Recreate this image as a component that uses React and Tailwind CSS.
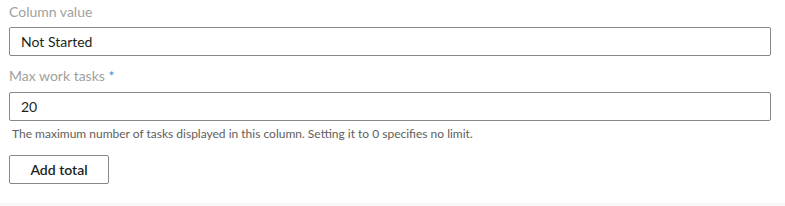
export default function App() {
  return (
    <div className="w-[785px] h-[206px] bg-white flex flex-col font-['Segoe_UI','Lato',sans-serif] overflow-hidden">
      <div className="flex flex-col px-[9px] pt-[2px] pr-[14px]">
        {/* Column value */}
        <label className="text-[14px] leading-[20px] text-[#a19f9d]">Column value</label>
        <div className="mt-[5px] h-[29px] border border-[#8a8886] rounded-[2px] flex items-center px-[11px] text-[14px] text-[#201f1e]">
          Not Started
        </div>

        {/* Max work tasks */}
        <label className="mt-[10px] text-[14px] leading-[20px] text-[#a19f9d]">
          Max work tasks <span className="text-[#3b8fd9]">*</span>
        </label>
        <div className="mt-[6px] h-[29px] border border-[#8a8886] rounded-[2px] flex items-center px-[11px] text-[14px] text-[#201f1e]">
          20
        </div>
        <p className="mt-[4px] pl-[3px] text-[12px] leading-[18px] text-[#605e5c]">
          The maximum number of tasks displayed in this column. Setting it to 0 specifies no limit.
        </p>

        <button
          type="button"
          className="mt-[12px] w-[100px] h-[29px] border border-[#8a8886] rounded-[2px] bg-white text-[14px] font-semibold text-[#201f1e]"
        >
          Add total
        </button>
      </div>
      <div className="mt-auto h-[3px] bg-[#f8f8f8]" />
    </div>
  )
}
